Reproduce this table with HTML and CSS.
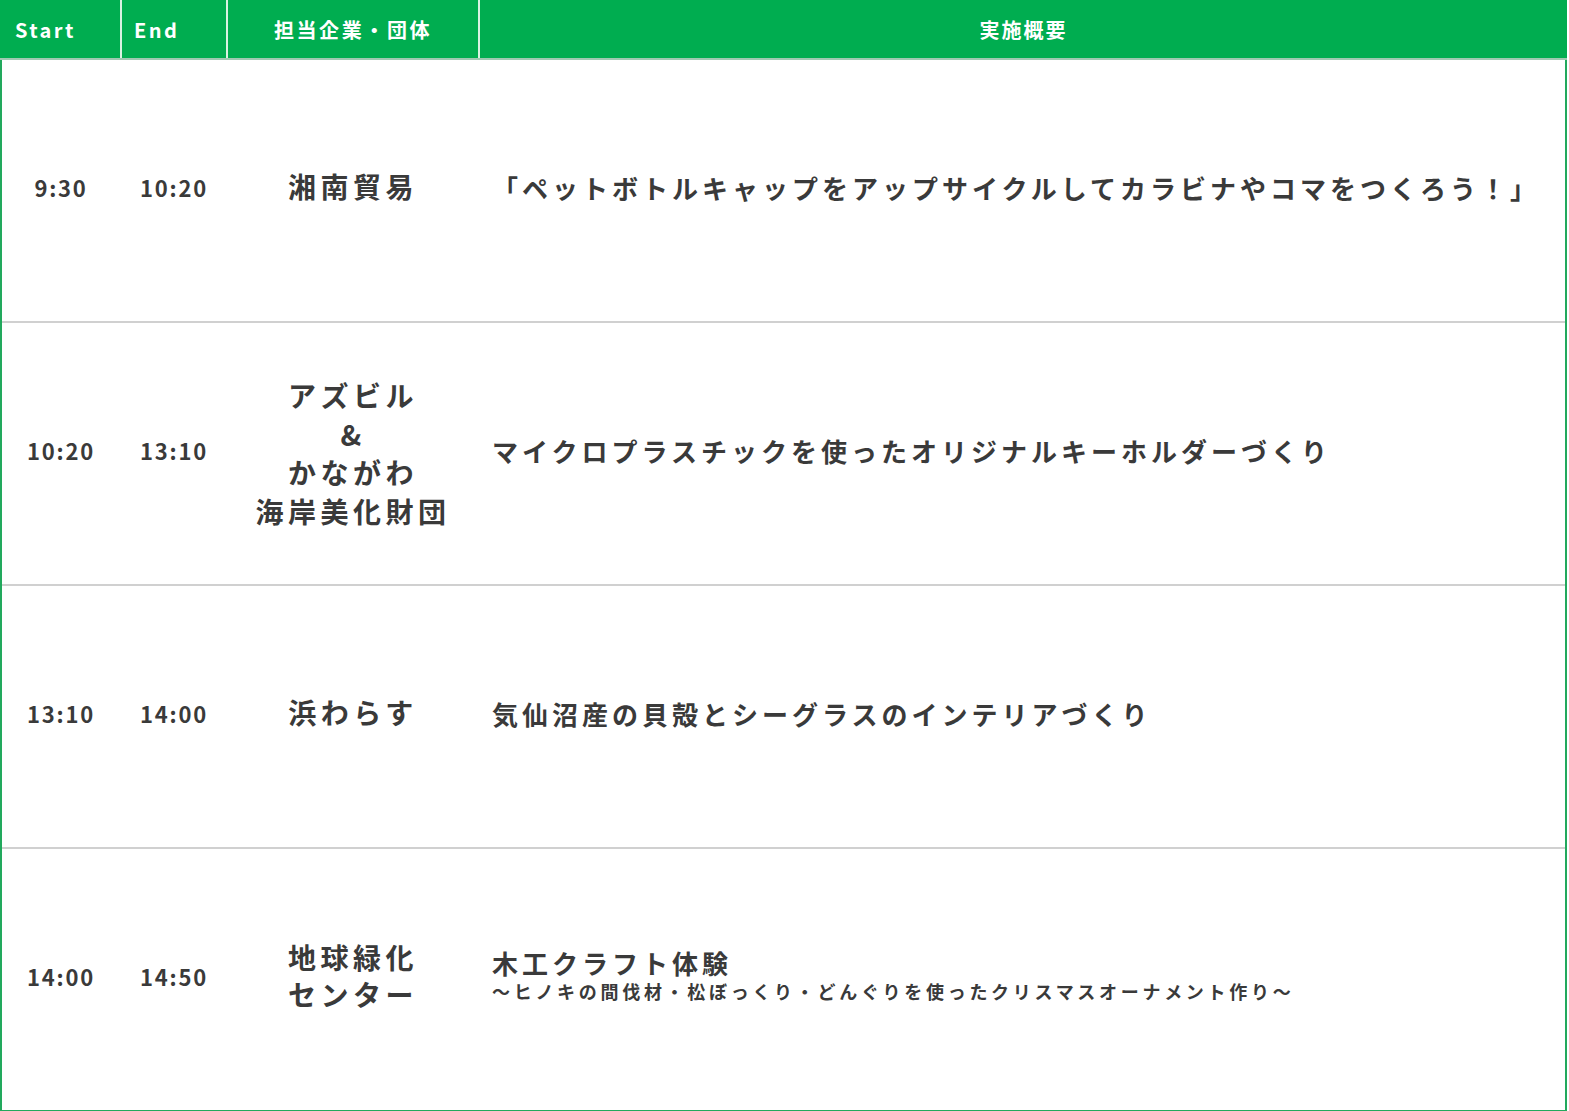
FILE: index.html
```html
<!DOCTYPE html>
<html lang="ja">
<head>
<meta charset="utf-8">
<link rel="stylesheet" href="styles.css">
</head>
<body>
<div class="schedule">
  <div class="row head">
    <div class="c c-start">Start</div>
    <div class="c c-end">End</div>
    <div class="c c-org">担当企業・団体</div>
    <div class="c c-desc">実施概要</div>
  </div>
  <div class="row body">
    <div class="c c-start">9:30</div>
    <div class="c c-end">10:20</div>
    <div class="c c-org">湘南貿易</div>
    <div class="c c-desc">「ペットボトルキャップをアップサイクルしてカラビナやコマをつくろう！」</div>
  </div>
  <div class="row body">
    <div class="c c-start">10:20</div>
    <div class="c c-end">13:10</div>
    <div class="c c-org multi">アズビル<br>&amp;<br>かながわ<br>海岸美化財団</div>
    <div class="c c-desc">マイクロプラスチックを使ったオリジナルキーホルダーづくり</div>
  </div>
  <div class="row body">
    <div class="c c-start">13:10</div>
    <div class="c c-end">14:00</div>
    <div class="c c-org">浜わらす</div>
    <div class="c c-desc">気仙沼産の貝殻とシーグラスのインテリアづくり</div>
  </div>
  <div class="row body last">
    <div class="c c-start">14:00</div>
    <div class="c c-end">14:50</div>
    <div class="c c-org">地球緑化<br>センター</div>
    <div class="c c-desc"><div class="title">木工クラフト体験</div><div class="sub">～ヒノキの間伐材・松ぼっくり・どんぐりを使ったクリスマスオーナメント作り～</div></div>
  </div>
</div>
</body>
</html>
```
FILE: styles.css
```css
html, body {
  margin: 0;
  padding: 0;
  background: #fff;
}
body {
  font-family: "Noto Sans CJK JP", "Noto Sans", sans-serif;
  color: #3a3a3a;
  font-weight: 700;
}
.schedule {
  width: 1563px;
  border: 2px solid #22a95d;
  border-top: none;
}
.row {
  display: grid;
  grid-template-columns: 118px 106px 252px 1fr;
}
.head {
  background: #00ad50;
  color: #fff;
  height: 58px;
  border-bottom: 2px solid #9fc9b2;
  margin-left: -2px;
  margin-right: -2px;
  grid-template-columns: 120px 106px 252px 1fr;
}
.head .c {
  display: flex;
  align-items: center;
  font-size: 20px;
  letter-spacing: 0.12em;
  border-left: 2px solid #d9f2e2;
}
.head .c:first-child {
  border-left: none;
}
.head .c-start { padding-left: 15px; }
.head .c-end { padding-left: 12px; }
.head .c-org, .head .c-desc { justify-content: center; }
.head .c-org { letter-spacing: 2.6px; }
.head .c-desc { letter-spacing: 2px; }
.body {
  height: 261px;
  border-bottom: 2px solid #d0d0d0;
}
.body.last {
  border-bottom: none;
}
.body .c {
  display: flex;
  align-items: center;
  padding-bottom: 7px;
}
.body .c-start, .body .c-end {
  justify-content: center;
  font-size: 22px;
  letter-spacing: 0.08em;
}
.body .c-end { padding-left: 2px; }
.body .c-org {
  justify-content: center;
  text-align: center;
  font-size: 28px;
  letter-spacing: 4.5px;
  line-height: 37.5px;
  padding-left: 2px;
}
.body .c-org.multi {
  line-height: 38.5px;
  padding-bottom: 1px;
}
.body .c-desc {
  padding-left: 14px;
  font-size: 26px;
  letter-spacing: 4px;
}
.body.last .c-desc {
  flex-direction: column;
  align-items: flex-start;
  justify-content: center;
}
.title {
  line-height: 30px;
}
.sub {
  font-size: 18px;
  letter-spacing: 3.7px;
  line-height: 26px;
}
```
